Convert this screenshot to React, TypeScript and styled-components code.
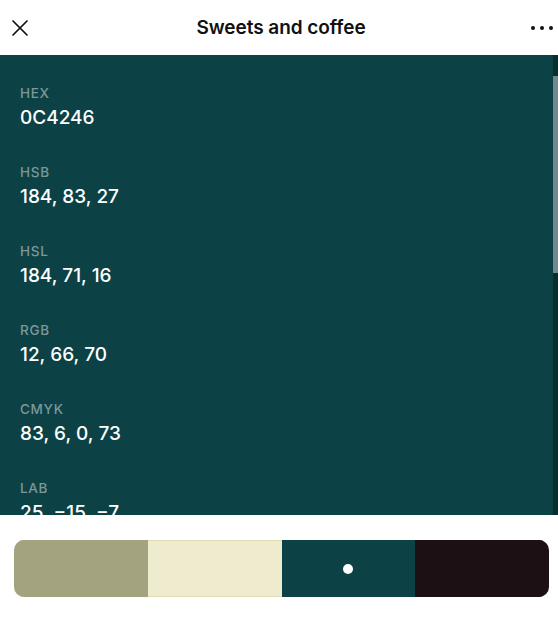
import React from "react";
import styled, { createGlobalStyle } from "styled-components";

const Global = createGlobalStyle`
  html, body { margin: 0; padding: 0; background: #ffffff; }
  body { font-family: Inter, "Noto Sans", sans-serif; -webkit-font-smoothing: antialiased; }
  * { box-sizing: border-box; }
`;

const Page = styled.div`
  width: 558px;
  height: 618px;
  display: flex;
  flex-direction: column;
  overflow: hidden;
`;

const Header = styled.header`
  height: 55px;
  display: flex;
  align-items: center;
  justify-content: space-between;
  padding: 0 4px 0 10px;
  background: #ffffff;
`;

const IconButton = styled.button<{ $w?: number }>`
  width: ${(p) => p.$w ?? 20}px;
  height: 20px;
  padding: 0;
  border: 0;
  background: transparent;
  display: flex;
  align-items: center;
  justify-content: center;
  color: #111;
`;

const Title = styled.h1`
  margin: 0 0 0 2px;
  font-size: 19px;
  font-weight: 600;
  color: #111111;
  letter-spacing: -0.05px;
`;

const Panel = styled.section<{ $bg: string }>`
  height: 460px;
  background: ${(p) => p.$bg};
  display: flex;
  overflow: hidden;
`;

const List = styled.div`
  flex: 1;
  padding: 30px 20px 0;
  display: flex;
  flex-direction: column;
  gap: 34px;
`;

const Item = styled.div`
  display: flex;
  flex-direction: column;
  gap: 5px;
`;

const Label = styled.div`
  font-size: 13.5px;
  line-height: 16px;
  font-weight: 500;
  letter-spacing: 0.7px;
  color: #7c9899;
`;

const Value = styled.div`
  font-size: 19px;
  line-height: 24px;
  font-weight: 500;
  color: #ffffff;
`;

const Track = styled.div`
  width: 5px;
  background: #0a2d30;
  display: flex;
  flex-direction: column;
`;

const Thumb = styled.div`
  margin-top: 21px;
  height: 197px;
  background: #71898a;
`;

const Footer = styled.div`
  flex: 1;
  padding: 25px 9px 0 14px;
  background: #ffffff;
`;

const Bar = styled.div`
  height: 57px;
  border-radius: 10px;
  overflow: hidden;
  display: flex;
`;

const Swatch = styled.div<{ $color: string; $border?: string }>`
  flex: 1;
  background: ${(p) => p.$color};
  display: flex;
  align-items: center;
  justify-content: center;
  border-top: 1px solid ${(p) => p.$border ?? p.$color};
  border-bottom: 1px solid ${(p) => p.$border ?? p.$color};
`;

const Dot = styled.div`
  width: 10px;
  height: 10px;
  border-radius: 50%;
  background: #ffffff;
`;

const values = [
  ["HEX", "0C4246"],
  ["HSB", "184, 83, 27"],
  ["HSL", "184, 71, 16"],
  ["RGB", "12, 66, 70"],
  ["CMYK", "83, 6, 0, 73"],
  ["LAB", "25, \u221215, \u22127"],
  ["XYZ", "3, 4, 6"],
];

const swatches = [
  { color: "#a3a380" },
  { color: "#efebce", border: "#e2dcb6" },
  { color: "#0c4246", selected: true },
  { color: "#1c1014" },
];

export default function App() {
  return (
    <Page>
      <Global />
      <Header>
        <IconButton aria-label="Close">
          <svg width="18" height="18" viewBox="0 0 18 18" fill="none" stroke="#111" strokeWidth="1.7" strokeLinecap="round">
            <path d="M2 2L16 16M16 2L2 16" />
          </svg>
        </IconButton>
        <Title>Sweets and coffee</Title>
        <IconButton aria-label="More" $w={24}>
          <svg width="24" height="6" viewBox="0 0 24 6" fill="#111">
            <circle cx="3" cy="3" r="2" />
            <circle cx="12" cy="3" r="2" />
            <circle cx="21" cy="3" r="2" />
          </svg>
        </IconButton>
      </Header>
      <Panel $bg="#0c4246">
        <List>
          {values.map(([k, v]) => (
            <Item key={k}>
              <Label>{k}</Label>
              <Value>{v}</Value>
            </Item>
          ))}
        </List>
        <Track>
          <Thumb />
        </Track>
      </Panel>
      <Footer>
        <Bar>
          {swatches.map((s) => (
            <Swatch key={s.color} $color={s.color} $border={s.border}>
              {s.selected && <Dot />}
            </Swatch>
          ))}
        </Bar>
      </Footer>
    </Page>
  );
}
